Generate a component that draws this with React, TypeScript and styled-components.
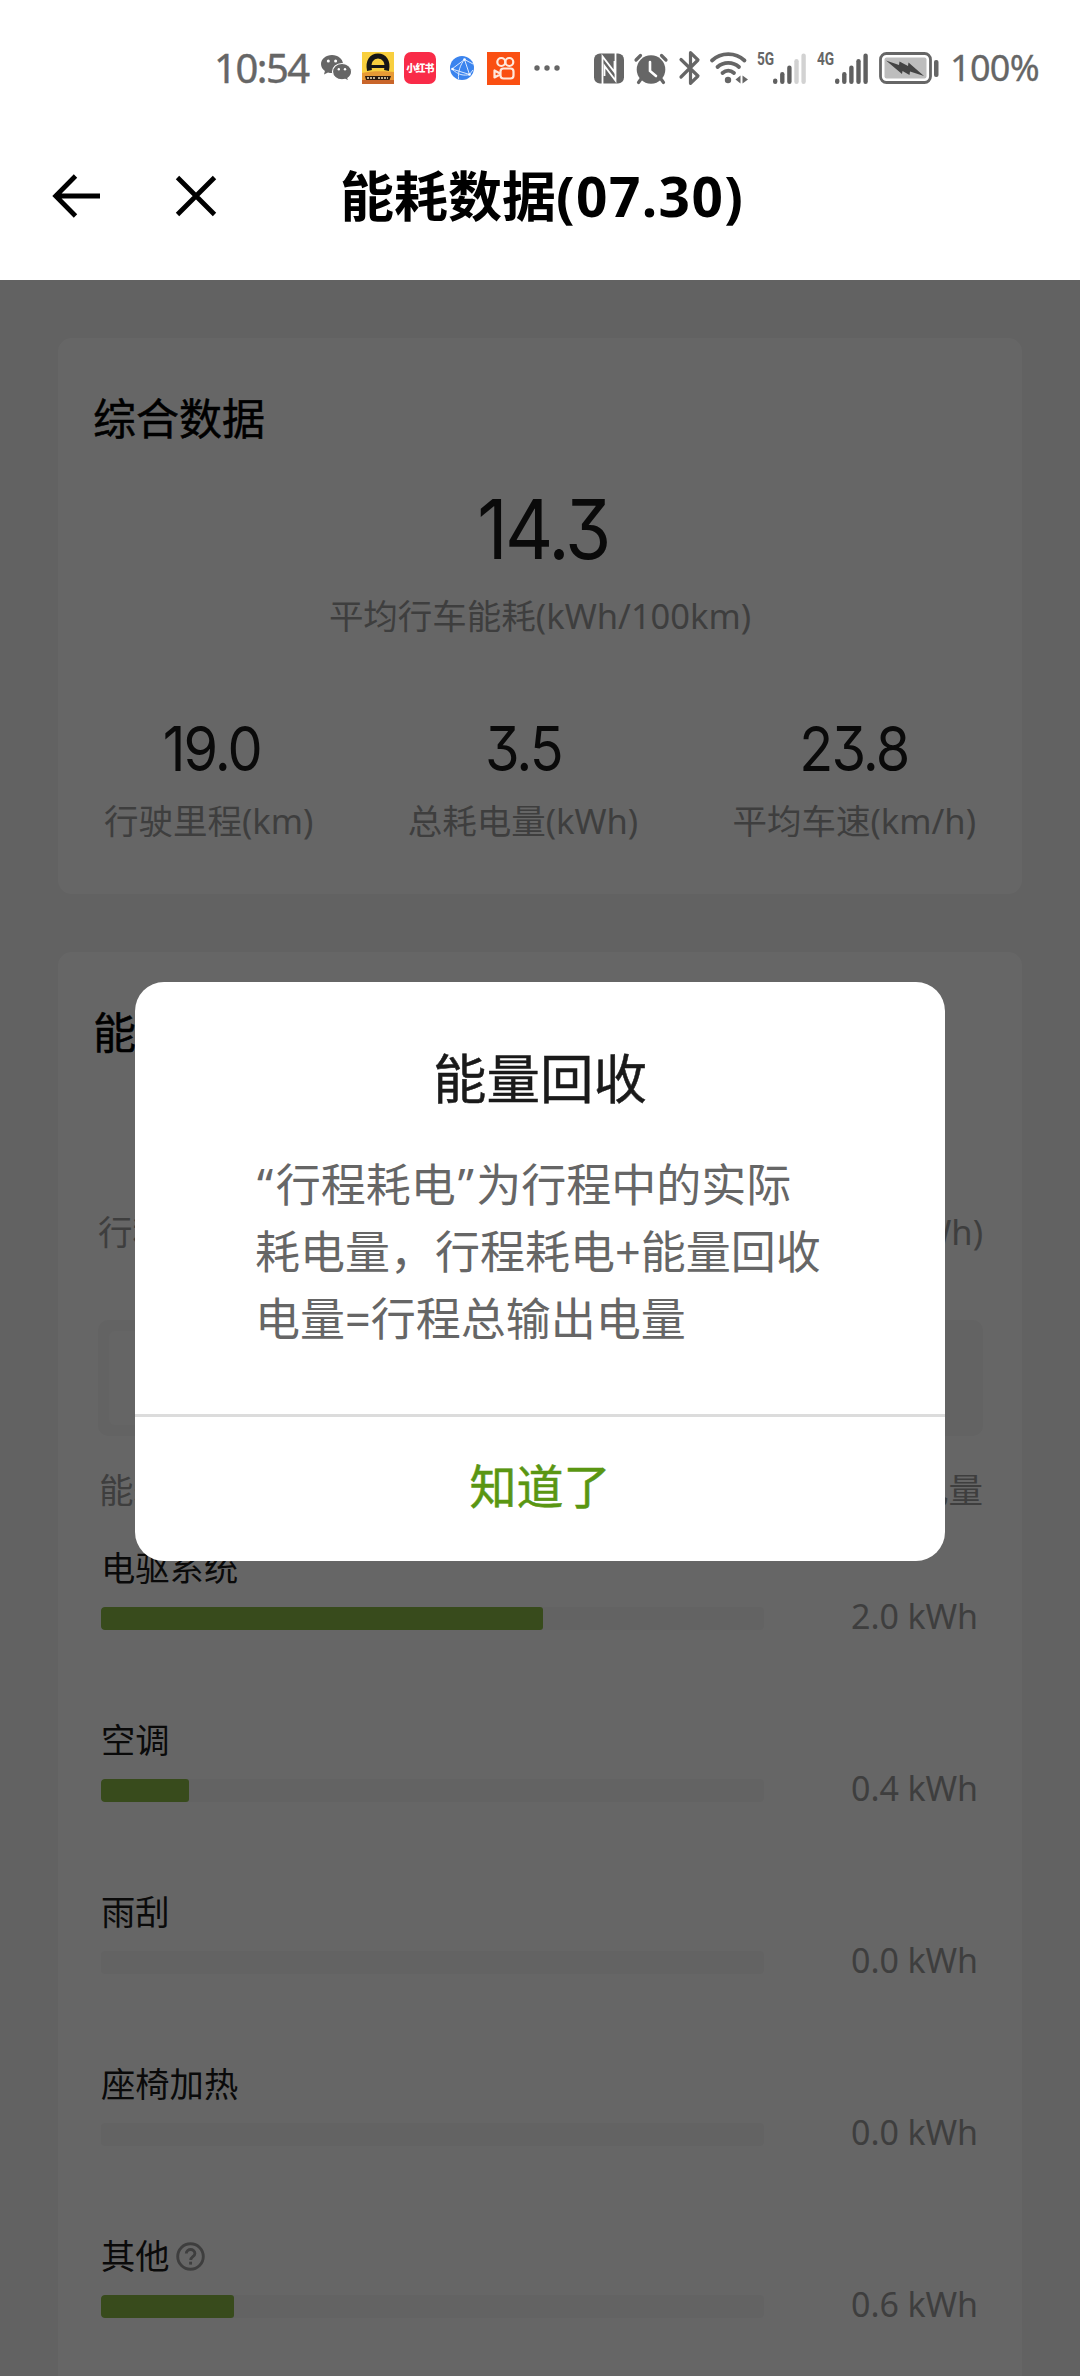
import React from "react";
import styled, { createGlobalStyle } from "styled-components";

const Global = createGlobalStyle`
  *, *::before, *::after { box-sizing: border-box; }
  body {
    margin: 0;
    background: #fff;
    font-family: "Noto Sans", "Noto Sans CJK SC", sans-serif;
  }
`;

const Screen = styled.div`
  width: 1080px;
  height: 2376px;
  overflow: hidden;
  display: flex;
  flex-direction: column;
  background: #fff;
`;

/* ---------- status bar ---------- */

const StatusBar = styled.div`
  height: 114px;
  padding: 22px 0 0 214px;
  display: flex;
  align-items: center;
  flex-shrink: 0;
  color: #666;
`;

const Slot = styled.div<{ $gap?: number; $w: number }>`
  width: ${(p) => p.$w}px;
  height: 36px;
  margin-left: ${(p) => p.$gap ?? 0}px;
  flex-shrink: 0;
  display: flex;
  align-items: center;
`;

const Icon = styled.svg`
  display: block;
  overflow: visible;
`;

const Clock = styled.span`
  font-size: 40px;
  line-height: 36px;
  letter-spacing: -1.5px;
  -webkit-text-stroke: 0.4px #666;
  white-space: nowrap;
`;

const Percent = styled.span`
  font-size: 36px;
  line-height: 36px;
  letter-spacing: -0.7px;
  -webkit-text-stroke: 0.3px #666;
  white-space: nowrap;
`;

const AppTile = styled.div<{ $bg: string; $radius?: number; $size: number }>`
  width: ${(p) => p.$size}px;
  height: ${(p) => p.$size}px;
  border-radius: ${(p) => p.$radius ?? 0}px;
  background: ${(p) => p.$bg};
  overflow: hidden;
  display: flex;
  align-items: center;
  justify-content: center;
`;

const TileText = styled.span`
  color: #fff;
  font: 900 10px/12px "Noto Sans CJK SC", sans-serif;
  letter-spacing: -0.8px;
  white-space: nowrap;
`;

const Network = styled.span`
  align-self: flex-start;
  font: 700 19px/17px Roboto, sans-serif;
  transform: scaleX(0.72);
  transform-origin: left;
  white-space: nowrap;
`;

/* ---------- navigation ---------- */

const NavBar = styled.div`
  height: 166px;
  flex-shrink: 0;
  display: grid;
  grid-template-columns: 340px 1fr 340px;
  align-items: center;
`;

const NavActions = styled.div`
  display: flex;
  align-items: center;
  gap: 74px;
  padding: 0 0 2px 52px;
`;

const NavTitle = styled.h1`
  margin: 0;
  padding-bottom: 2px;
  text-align: center;
  font-size: 54px;
  line-height: 72px;
  font-weight: 700;
  color: #000;
  white-space: nowrap;
`;

const TitleDate = styled.span`
  font-size: 55px;
  letter-spacing: 1.4px;
`;

/* ---------- content ---------- */

const Content = styled.main`
  position: relative;
  flex: 1;
  min-height: 0;
  overflow: hidden;
  padding: 58px 58px 0;
  background: #f5f5f5;
  display: flex;
  flex-direction: column;
  gap: 58px;
`;

const Card = styled.section<{ $h: number }>`
  height: ${(p) => p.$h}px;
  flex-shrink: 0;
  width: 964px;
  border-radius: 14px;
  background: #fff;
  padding-top: 51px;
`;

const CardTitle = styled.h2`
  margin: 0 0 0 35px;
  font-size: 43px;
  line-height: 60px;
  font-weight: 400;
  color: #000;
  -webkit-text-stroke: 0.5px #000;
`;

const Figure = styled.div<{ $size: number; $line: number; $shift?: number }>`
  font-family: Inter, sans-serif;
  font-feature-settings: "cv09" 1;
  font-size: ${(p) => p.$size}px;
  line-height: ${(p) => p.$line}px;
  letter-spacing: -0.035em;
  text-align: center;
  color: #1a1a1a;
  transform: translate(${(p) => p.$shift ?? 0}px, 1px) scaleX(0.9);
`;

const Label = styled.div`
  font-size: 34.5px;
  line-height: 44px;
  color: #9c9c9c;
  text-align: center;
  white-space: nowrap;
`;

const Summary = styled.div`
  margin-top: 29px;
  display: flex;
  flex-direction: column;
  gap: 16px;
`;

const Stats = styled.div<{ $top: number }>`
  margin-top: ${(p) => p.$top}px;
  padding: 0 46px 0 46px;
  display: flex;
  justify-content: space-between;
`;

const Stat = styled.div`
  display: flex;
  flex-direction: column;
  gap: 21px;
`;

const TripStats = styled(Stats)`
  padding: 0 39px 0 40px;
`;

const Gauge = styled.div`
  margin: 66px 39px 0 40px;
  height: 116px;
  padding: 11px;
  border-radius: 10px;
  background: #f7f7f7;
`;

const GaugeFill = styled.div`
  width: 80%;
  height: 94px;
  border-radius: 6px;
  background: #fdfdfd;
`;

const ListHead = styled.div`
  margin: 32px 39px 34px 41px;
  display: flex;
  justify-content: space-between;
`;

const Item = styled.div`
  height: 172px;
  padding: 0 44px 0 43px;
`;

const ItemName = styled.div`
  display: flex;
  align-items: center;
  gap: 6px;
  font-size: 34.3px;
  line-height: 44px;
  color: #1a1a1a;
`;

const ItemRow = styled.div`
  margin-top: 17px;
  height: 23px;
  display: flex;
  align-items: center;
  justify-content: space-between;
`;

const Track = styled.div`
  width: 663px;
  height: 23px;
  border-radius: 4px;
  background: #f7f7f7;
  overflow: hidden;
`;

const Bar = styled.div`
  height: 23px;
  border-radius: 3px;
  background: #8cbb48;
`;

const Amount = styled(Label)`
  padding-bottom: 5px;
  font-size: 34px;
  letter-spacing: -0.1px;
`;

/* ---------- dialog ---------- */

const Backdrop = styled.div`
  position: absolute;
  inset: 0;
  padding-top: 702px;
  display: flex;
  justify-content: center;
  align-items: flex-start;
  background: rgba(0, 0, 0, 0.6);
`;

const Dialog = styled.div`
  width: 810px;
  height: 579px;
  border-radius: 29px;
  background: #fff;
  display: flex;
  flex-direction: column;
`;

const DialogTitle = styled.h3`
  margin: 61px 0 0;
  text-align: center;
  font-size: 53.5px;
  line-height: 72px;
  font-weight: 400;
  color: #1a1a1a;
  -webkit-text-stroke: 0.5px #1a1a1a;
`;

const DialogText = styled.p`
  margin: 36px 0 0 120px;
  font-size: 45px;
  line-height: 67px;
  color: #666;
  white-space: nowrap;
`;

const Quote = styled.span`
  padding-left: 2px;
  letter-spacing: 2.5px;
`;

const Confirm = styled.button`
  margin: auto 0 0;
  height: 147px;
  padding: 0 0 7px;
  border: 0;
  border-top: 3px solid #dcdcdc;
  background: none;
  font: 400 47px/60px "Noto Sans", "Noto Sans CJK SC", sans-serif;
  color: #5a9612;
  -webkit-text-stroke: 0.5px #5a9612;
`;

const items = [
  { name: "电驱系统", amount: "2.0", share: 66.67 },
  { name: "空调", amount: "0.4", share: 13.33 },
  { name: "雨刮", amount: "0.0", share: 0 },
  { name: "座椅加热", amount: "0.0", share: 0 },
  { name: "其他", amount: "0.6", share: 20, help: true },
];

function WeChat() {
  return (
    <Icon width="31" height="27" viewBox="0 0 31 27" fill="#666">
      <path d="M11 0C4.9 0 0 4 0 9c0 2.900 1.500 5.300 3.900 7L3 19.500l4-2.100c1.200.4 2.600.6 4 .6C17 18 22 14 22 9S17 0 11 0Z" />
      <path d="M21 8.500c-5.500 0-9.500 3.700-9.500 8.200s4 8.100 9.500 8.100c1.200 0 2.300-.2 3.300-.5l3.400 1.900-.8-3c2.400-1.600 3.700-3.900 3.700-6.500 0-4.500-4.200-8.200-9.600-8.200Z" stroke="#fff" strokeWidth="1.200" />
      <g fill="#fff">
        <circle cx="7.300" cy="6" r="1.500" />
        <circle cx="14.600" cy="6" r="1.500" />
        <circle cx="17.800" cy="14.200" r="1.200" />
        <circle cx="24" cy="14.200" r="1.200" />
      </g>
    </Icon>
  );
}

function CarApp() {
  return (
    <Icon width="32" height="32" viewBox="0 0 32 32">
      <rect width="32" height="32" fill="#f8cf3e" />
      <path d="M0 21c8-2 23-2 32-1v12H0Z" fill="#e79a35" />
      <path d="M0 28h32v4H0Z" fill="#c9652a" />
      <path d="M7.500 18.500C5.500 9.500 9.800 4 16 4s10.500 5.500 8.500 14.500" fill="none" stroke="#161616" strokeWidth="5" />
      <path d="M9 13h14v3H9Z" fill="#161616" />
      <path d="M3 24h26l-1.500 4H4Z" fill="#2b1a10" />
      <path d="M5 26h9M16 26h10" stroke="#f6e3b8" strokeWidth="1.600" strokeDasharray="2 1" />
    </Icon>
  );
}

function Globe() {
  return (
    <Icon width="24" height="24" viewBox="0 0 24 24">
      <circle cx="12" cy="12" r="12" fill="#3b84ee" />
      <g fill="none" stroke="#d9e8ff" strokeWidth="1">
        <path d="M2 13 14.500 3.500 19.500 18.500Z" />
        <path d="M14.500 3.500C10 9 8 16 8.500 23M2 13c6 6 12 7 17.500 5.500M14.500 3.500 23 8M19.500 18.500 23 14" />
      </g>
      <g fill="#fff">
        <circle cx="14.500" cy="3.500" r="1.300" />
        <circle cx="2.500" cy="13" r="1.300" />
        <circle cx="19.500" cy="18.500" r="1.300" />
      </g>
    </Icon>
  );
}

function Camera() {
  return (
    <Icon width="24" height="24" viewBox="0 0 24 24" fill="none" stroke="#ffe9dd" strokeWidth="2.200">
      <circle cx="9.300" cy="6" r="4" />
      <circle cx="17.300" cy="6" r="4" />
      <rect x="8.500" y="12.500" width="13" height="10" rx="3" />
      <path d="M8 17.500 2.500 14.500v7L8 18.500" strokeLinejoin="round" />
    </Icon>
  );
}

function Nfc() {
  return (
    <Icon width="30" height="31" viewBox="0 0 30 31">
      <rect y="0.500" width="30" height="30" rx="6" fill="#666" />
      <path d="M8.500 31V3.500L20.500 19V8" fill="none" stroke="#fff" strokeWidth="1.800" />
      <path d="M21.500 0v27.500L10.500 13v10" fill="none" stroke="#fff" strokeWidth="1.800" />
    </Icon>
  );
}

function Alarm() {
  return (
    <Icon width="34" height="31" viewBox="0 0 34 31">
      <circle cx="17" cy="16.500" r="14.300" fill="#666" />
      <g fill="none" stroke="#666" strokeWidth="3.200" strokeLinecap="round">
        <path d="M2 7 6.500 2.500M32 7l-4.500-4.500M7 26l-2.500 3.500M27 26l2.500 3.500" />
      </g>
      <path d="M16 9v9l6 5" fill="none" stroke="#fff" strokeWidth="2.600" strokeLinecap="round" />
    </Icon>
  );
}

function Bluetooth() {
  return (
    <Icon width="21" height="34" viewBox="0 0 21 34" fill="none" stroke="#666" strokeWidth="3.200" strokeLinecap="round" strokeLinejoin="round">
      <path d="M2 8.500 19 25l-7.500 7.300V1.700L19 9 2 26" />
    </Icon>
  );
}

function Wifi() {
  return (
    <Icon width="38" height="32" viewBox="0 0 38 32">
      <g fill="none" stroke="#666" strokeWidth="3.800" strokeLinecap="round">
        <path d="M2 8.500c9-8.500 23.500-8.500 32.500 0" />
        <path d="M7.500 15c6-5.500 15.500-5.500 21.500 0" />
        <path d="M12.500 21c3.500-3 8-3 11.500 0" />
      </g>
      <circle cx="18" cy="28" r="3.200" fill="#666" />
      <path d="M30.500 23.500v8L25.500 27.500ZM32.500 23.500v8l5.500-4Z" fill="#666" />
    </Icon>
  );
}

function Signal({ level }: { level: number }) {
  return (
    <Icon width="33" height="31" viewBox="0 0 33 31">
      {[5.5, 12, 18.5, 25, 30.5].map((h, i) => (
        <rect key={h} x={i * 7.1} y={31 - h} width="4.400" height={h} rx="2.200" fill={i < level ? "#606060" : "#d2d2d2"} />
      ))}
    </Icon>
  );
}

function Battery() {
  return (
    <Icon width="60" height="32" viewBox="0 0 60 32">
      <rect x="1.500" y="1.500" width="50" height="29" rx="6" fill="#fff" stroke="#666" strokeWidth="2.800" />
      <rect x="5.500" y="5.500" width="42" height="21" rx="2" fill="#bdbdbd" />
      <path d="M7 8.500 20 13l.5-3.500L29 14l.5-3.500L45 24l-14-4.500-.5 3.500-7-4-.5 3Z" fill="#444" />
      <rect x="55" y="8" width="4.500" height="17" rx="2" fill="#666" />
    </Icon>
  );
}

function Help() {
  return (
    <Icon width="29" height="29" viewBox="0 0 29 29" fill="none" stroke="#9c9c9c" strokeWidth="2.900">
      <circle cx="14.500" cy="14.500" r="12.800" />
      <path d="M10.300 11.600c0-5.400 8.600-5.300 8.600-.2 0 3.200-4.200 3.300-4.200 6.600" />
      <path d="M14.600 19.700v2.900" />
    </Icon>
  );
}

export default function App() {
  return (
    <Screen>
      <Global />
      <StatusBar>
        <Slot $w={97}><Clock>10:54</Clock></Slot>
        <Slot $w={31} $gap={10}><WeChat /></Slot>
        <Slot $w={32} $gap={10}><CarApp /></Slot>
        <Slot $w={32} $gap={10}>
          <AppTile $bg="#f92b48" $radius={7} $size={32}><TileText>小红书</TileText></AppTile>
        </Slot>
        <Slot $w={24} $gap={14}><Globe /></Slot>
        <Slot $w={33} $gap={13}>
          <AppTile $bg="#fa4f12" $size={33}><Camera /></AppTile>
        </Slot>
        <Slot $w={26} $gap={14}>
          <Icon width="26" height="6" viewBox="0 0 26 6" fill="#666">
            <circle cx="3" cy="3" r="2.700" />
            <circle cx="13" cy="3" r="2.700" />
            <circle cx="23" cy="3" r="2.700" />
          </Icon>
        </Slot>
        <Slot $w={30} $gap={34}><Nfc /></Slot>
        <Slot $w={34} $gap={10}><Alarm /></Slot>
        <Slot $w={21} $gap={11}><Bluetooth /></Slot>
        <Slot $w={38} $gap={10}><Wifi /></Slot>
        <Slot $w={17} $gap={9}><Network>5G</Network></Slot>
        <Slot $w={33} $gap={-1}><Signal level={3} /></Slot>
        <Slot $w={18} $gap={11}><Network>4G</Network></Slot>
        <Slot $w={33} $gap={0}><Signal level={5} /></Slot>
        <Slot $w={60} $gap={11}><Battery /></Slot>
        <Slot $w={88} $gap={11}><Percent>100%</Percent></Slot>
      </StatusBar>

      <NavBar>
        <NavActions>
          <Icon width="49" height="44" viewBox="0 0 49 44" fill="none" stroke="#000" strokeWidth="4.800">
            <path d="M23.500 2 3.700 22l19.800 20M3.700 22H48" />
          </Icon>
          <Icon width="42" height="42" viewBox="0 0 42 42" fill="none" stroke="#000" strokeWidth="4.800">
            <path d="M2.500 2.500 39.500 39.500M39.500 2.500 2.500 39.500" />
          </Icon>
        </NavActions>
        <NavTitle>能耗数据<TitleDate>(07.30)</TitleDate></NavTitle>
      </NavBar>

      <Content>
        <Card $h={556}>
          <CardTitle>综合数据</CardTitle>
          <Summary>
            <Figure $size={83} $line={100} $shift={3}>14.3</Figure>
            <Label>平均行车能耗(kWh/100km)</Label>
          </Summary>
          <Stats $top={80}>
            <Stat>
              <Figure $size={62} $line={60} $shift={3}>19.0</Figure>
              <Label>行驶里程(km)</Label>
            </Stat>
            <Stat>
              <Figure $size={62} $line={60}>3.5</Figure>
              <Label>总耗电量(kWh)</Label>
            </Stat>
            <Stat>
              <Figure $size={62} $line={60}>23.8</Figure>
              <Label>平均车速(km/h)</Label>
            </Stat>
          </Stats>
        </Card>

        <Card $h={1600}>
          <CardTitle>能耗分布</CardTitle>
          <TripStats $top={66}>
            <Stat>
              <Figure $size={62} $line={60}>3.0</Figure>
              <Label>行程耗电(kWh)</Label>
            </Stat>
            <Stat>
              <Figure $size={62} $line={60}>0.5</Figure>
              <Label>能量回收(kWh)</Label>
            </Stat>
          </TripStats>
          <Gauge><GaugeFill /></Gauge>
          <ListHead>
            <Label>能耗项目</Label>
            <Label>耗电量</Label>
          </ListHead>
          {items.map((item) => (
            <Item key={item.name}>
              <ItemName>{item.name}{item.help && <Help />}</ItemName>
              <ItemRow>
                <Track><Bar style={{ width: `${item.share}%` }} /></Track>
                <Amount>{item.amount} kWh</Amount>
              </ItemRow>
            </Item>
          ))}
        </Card>

        <Backdrop>
          <Dialog role="dialog">
            <DialogTitle>能量回收</DialogTitle>
            <DialogText>
              <Quote>“</Quote>行程耗电<Quote>”</Quote>为行程中的实际<br />
              耗电量，行程耗电+能量回收<br />
              电量=行程总输出电量
            </DialogText>
            <Confirm>知道了</Confirm>
          </Dialog>
        </Backdrop>
      </Content>
    </Screen>
  );
}
